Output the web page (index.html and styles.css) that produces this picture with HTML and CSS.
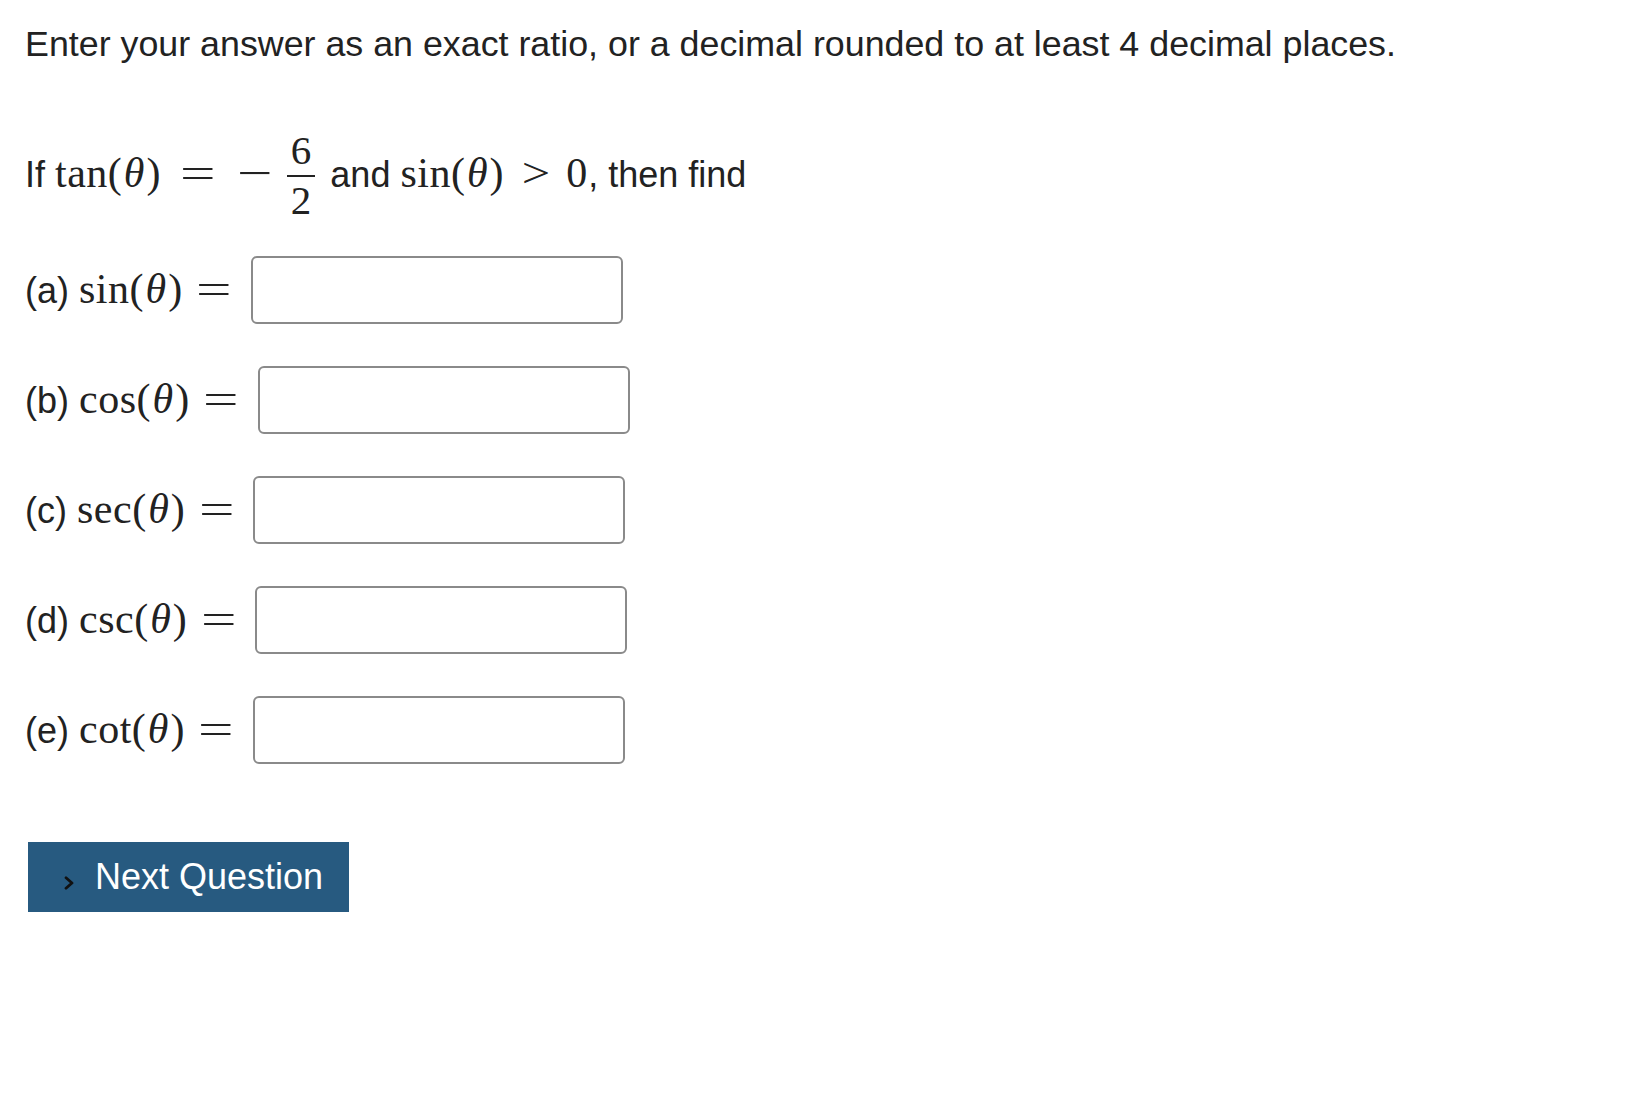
FILE: index.html
```html
<!DOCTYPE html>
<html lang="en">
<head>
<meta charset="utf-8">
<title>Trigonometry question</title>
<link rel="stylesheet" href="styles.css">
</head>
<body>
<main class="page">
  <p class="instructions">Enter your answer as an exact ratio, or a decimal rounded to at least 4 decimal places.</p>
  <p class="question">If <span class="math"><span class="fn">tan</span><span class="paren">(</span><span class="var">θ</span><span class="paren">)</span><span class="rel">=</span><span class="op">−</span><span class="frac"><span class="num">6</span><span class="bar"></span><span class="den">2</span></span></span> and <span class="math"><span class="fn">sin</span><span class="paren">(</span><span class="var">θ</span><span class="paren">)</span><span class="rel gt">&gt;</span><span class="mn">0</span></span>, then find</p>
  <div class="answers">
    <div class="answer-row">
      <span class="label">(a) <span class="math"><span class="fn">sin</span><span class="paren">(</span><span class="var">θ</span><span class="paren">)</span><span class="rel">=</span></span></span>
      <input class="answer-input" type="text" aria-label="sin theta">
    </div>
    <div class="answer-row">
      <span class="label">(b) <span class="math"><span class="fn">cos</span><span class="paren">(</span><span class="var">θ</span><span class="paren">)</span><span class="rel">=</span></span></span>
      <input class="answer-input" type="text" aria-label="cos theta">
    </div>
    <div class="answer-row">
      <span class="label">(c) <span class="math"><span class="fn">sec</span><span class="paren">(</span><span class="var">θ</span><span class="paren">)</span><span class="rel">=</span></span></span>
      <input class="answer-input" type="text" aria-label="sec theta">
    </div>
    <div class="answer-row">
      <span class="label">(d) <span class="math"><span class="fn">csc</span><span class="paren">(</span><span class="var">θ</span><span class="paren">)</span><span class="rel">=</span></span></span>
      <input class="answer-input" type="text" aria-label="csc theta">
    </div>
    <div class="answer-row">
      <span class="label">(e) <span class="math"><span class="fn">cot</span><span class="paren">(</span><span class="var">θ</span><span class="paren">)</span><span class="rel">=</span></span></span>
      <input class="answer-input" type="text" aria-label="cot theta">
    </div>
  </div>
  <button class="next-btn" type="button"><svg class="chev" viewBox="0 0 10 14" aria-hidden="true"><polyline points="2,1.8 8,7 2,12.2" fill="none" stroke="#111" stroke-width="2.8" stroke-linecap="round" stroke-linejoin="round"/></svg><span>Next Question</span></button>
</main>
</body>
</html>
```
FILE: styles.css
```css
* { box-sizing: border-box; }

body {
  margin: 0;
  background: #fff;
  color: #222;
  font-family: "Liberation Sans", Arial, sans-serif;
  font-size: 36px;
  line-height: 1.2;
}

.page {
  padding: 23px 25px 0;
}

.instructions {
  margin: 0;
  font-size: 35.8px;
}

.question {
  margin: 66px 0 0;
}

.math {
  font-family: "Liberation Serif", "Times New Roman", serif;
  font-size: 42px;
  line-height: 1;
  white-space: nowrap;
}

.fn { letter-spacing: 0.5px; }

.var {
  font-style: italic;
  padding: 0 2px;
}

.rel,
.op {
  display: inline-block;
  transform: scaleX(1.5);
}

.rel { margin: 0 33px 0 26px; }

.rel.gt {
  transform: scaleX(1.2);
  margin: 0 19px 0 20px;
}

.op {
  margin-right: 20px;
  transform: scaleX(1.5);
}

.mn { margin-right: 1px; }

.frac {
  display: inline-flex;
  flex-direction: column;
  align-items: center;
  vertical-align: 23px;
  font-size: 41px;
  line-height: 36px;
  margin-right: 5px;
}

.num,
.den {
  padding: 0 4px;
}

.bar {
  align-self: stretch;
  height: 2px;
  background: currentColor;
  margin: 7px 0 5px;
}

.answers {
  margin-top: 38px;
  display: flex;
  flex-direction: column;
  gap: 42px;
}

.answer-row {
  display: flex;
  align-items: center;
}

.label { white-space: pre; }

.label .rel { margin: 0 0 0 20px; }

.answer-input {
  width: 372px;
  height: 68px;
  margin: 0 0 0 25px;
  border: 2px solid #8a8a8a;
  border-radius: 6px;
  background: #fff;
  font: inherit;
}

.next-btn {
  display: flex;
  align-items: center;
  margin: 78px 0 0 3px;
  width: 321px;
  height: 70px;
  padding: 0 0 0 36px;
  background: #275a80;
  border: 0;
  border-radius: 0;
  color: #fff;
  font-family: "Liberation Sans", Arial, sans-serif;
  font-size: 36px;
}

.chev {
  width: 10px;
  height: 14px;
  margin: 12px 21px 0 0;
}
```
